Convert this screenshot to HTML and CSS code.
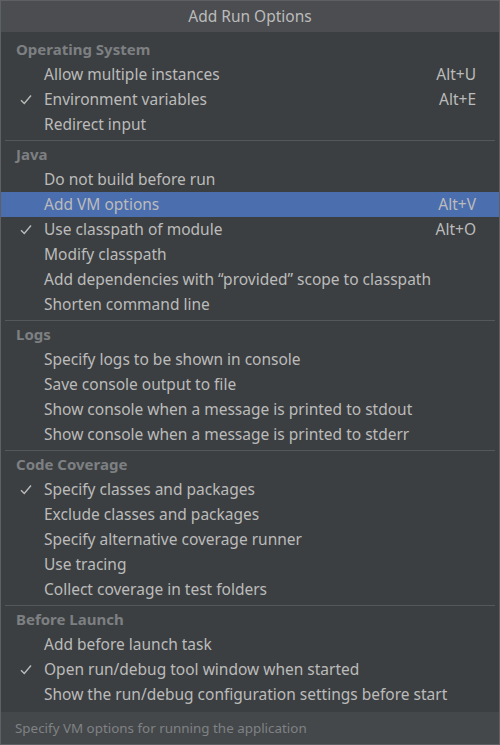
FILE: index.html
```html
<!DOCTYPE html>
<html>
<head>
<meta charset="utf-8">
<link rel="stylesheet" href="styles.css">
</head>
<body>
<div class="win">
  <div class="title">Add Run Options</div>
  <div class="list">
    <div class="group">
      <div class="hdr">Operating System</div>
      <div class="item"><span class="chk"></span><span class="lbl">Allow multiple instances</span><span class="key">Alt+U</span></div>
      <div class="item"><span class="chk"><svg viewBox="0 0 12 11" width="12" height="11"><path d="M1 6.2 L4.3 9.5 L11 1.5" fill="none" stroke="#bbbbbb" stroke-width="1.4"/></svg></span><span class="lbl">Environment variables</span><span class="key">Alt+E</span></div>
      <div class="item"><span class="chk"></span><span class="lbl">Redirect input</span></div>
    </div>
    <div class="sep"></div>
    <div class="group">
      <div class="hdr">Java</div>
      <div class="item"><span class="chk"></span><span class="lbl">Do not build before run</span></div>
      <div class="item sel"><span class="chk"></span><span class="lbl">Add VM options</span><span class="key">Alt+V</span></div>
      <div class="item"><span class="chk"><svg viewBox="0 0 12 11" width="12" height="11"><path d="M1 6.2 L4.3 9.5 L11 1.5" fill="none" stroke="#bbbbbb" stroke-width="1.4"/></svg></span><span class="lbl">Use classpath of module</span><span class="key">Alt+O</span></div>
      <div class="item"><span class="chk"></span><span class="lbl">Modify classpath</span></div>
      <div class="item"><span class="chk"></span><span class="lbl">Add dependencies with “provided” scope to classpath</span></div>
      <div class="item"><span class="chk"></span><span class="lbl">Shorten command line</span></div>
    </div>
    <div class="sep"></div>
    <div class="group">
      <div class="hdr">Logs</div>
      <div class="item"><span class="chk"></span><span class="lbl">Specify logs to be shown in console</span></div>
      <div class="item"><span class="chk"></span><span class="lbl">Save console output to file</span></div>
      <div class="item"><span class="chk"></span><span class="lbl">Show console when a message is printed to stdout</span></div>
      <div class="item"><span class="chk"></span><span class="lbl">Show console when a message is printed to stderr</span></div>
    </div>
    <div class="sep"></div>
    <div class="group">
      <div class="hdr">Code Coverage</div>
      <div class="item"><span class="chk"><svg viewBox="0 0 12 11" width="12" height="11"><path d="M1 6.2 L4.3 9.5 L11 1.5" fill="none" stroke="#bbbbbb" stroke-width="1.4"/></svg></span><span class="lbl">Specify classes and packages</span></div>
      <div class="item"><span class="chk"></span><span class="lbl">Exclude classes and packages</span></div>
      <div class="item"><span class="chk"></span><span class="lbl">Specify alternative coverage runner</span></div>
      <div class="item"><span class="chk"></span><span class="lbl">Use tracing</span></div>
      <div class="item"><span class="chk"></span><span class="lbl">Collect coverage in test folders</span></div>
    </div>
    <div class="sep"></div>
    <div class="group">
      <div class="hdr">Before Launch</div>
      <div class="item"><span class="chk"></span><span class="lbl">Add before launch task</span></div>
      <div class="item"><span class="chk"><svg viewBox="0 0 12 11" width="12" height="11"><path d="M1 6.2 L4.3 9.5 L11 1.5" fill="none" stroke="#bbbbbb" stroke-width="1.4"/></svg></span><span class="lbl">Open run/debug tool window when started</span></div>
      <div class="item"><span class="chk"></span><span class="lbl">Show the run/debug configuration settings before start</span></div>
    </div>
  </div>
  <div class="foot">Specify VM options for running the application</div>
</div>
</body>
</html>
```
FILE: styles.css
```css
html, body {
  margin: 0;
  padding: 0;
  background: #3c3f41;
}
body {
  font-family: "Noto Sans", "Open Sans", sans-serif;
  font-size: 15.5px;
  color: #bbbbbb;
}
.win {
  width: 500px;
  height: 745px;
  box-sizing: border-box;
  border: 1px solid #5e6164;
  display: flex;
  flex-direction: column;
  background: #3c3f41;
}
.title {
  height: 31px;
  background: #4b4d50;
  display: flex;
  align-items: center;
  justify-content: center;
  color: #bbbbbb;
  font-size: 15.5px;
  padding-bottom: 1px;
  box-sizing: border-box;
}
.list {
  flex: 1;
  padding-top: 5px;
  display: flex;
  flex-direction: column;
}
.hdr {
  height: 25px;
  box-sizing: border-box;
  padding-bottom: 2px;
  display: flex;
  align-items: center;
  padding-left: 15px;
  font-size: 15px;
  font-weight: bold;
  color: #7d8083;
}
.item {
  height: 25px;
  box-sizing: border-box;
  padding-bottom: 2px;
  display: flex;
  align-items: center;
}
.item.sel {
  background: #4b6eaf;
}
.chk {
  width: 43px;
  padding-left: 19px;
  box-sizing: border-box;
  display: flex;
  align-items: center;
  padding-top: 1px;
}
.lbl {
  flex: 1;
  white-space: nowrap;
}
.key {
  padding-right: 23px;
}
.sep {
  height: 5px;
  display: flex;
  align-items: center;
  padding: 0 4px;
}
.sep::before {
  content: "";
  flex: 1;
  height: 1px;
  margin-top: 1px;
  background: #55585b;
}
.foot {
  height: 32px;
  box-sizing: border-box;
  padding-bottom: 1px;
  background: #45484a;
  display: flex;
  align-items: center;
  padding-left: 14px;
  font-size: 13.4px;
  color: #7f8285;
}
```
